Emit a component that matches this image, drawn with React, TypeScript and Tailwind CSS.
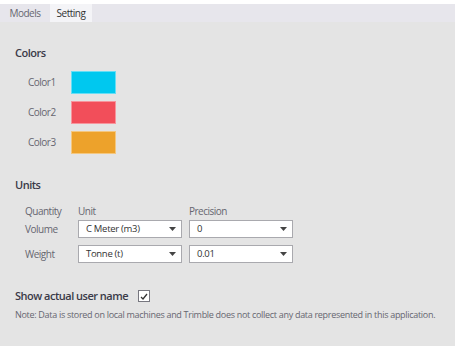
import { useState } from "react";

const colors = [
    { name: "Color1", value: "#00c8ef" },
    { name: "Color2", value: "#f24e5a" },
    { name: "Color3", value: "#eda22b" },
];

const Select = ({ value }: { value: string }) => {
    return (
        <div className="w-[104px] h-[18px] bg-white border border-[#a9a9ae] flex items-center justify-between pl-[7px] pr-[5px]">
            <span className="text-[9.5px] tracking-[-0.3px] text-[#333]">{value}</span>
            <svg width="7" height="4" viewBox="0 0 7 4">
                <path d="M0 0 L7 0 L3.5 4 Z" fill="#444" />
            </svg>
        </div>
    );
};

const App = () => {
    const [showName, setShowName] = useState(true);

    return (
        <div className="w-[455px] h-[346px] bg-[#e4e4e4] flex flex-col font-['Open_Sans','Noto_Sans',sans-serif] tracking-[-0.5px]">
            <div className="h-[4px] bg-white" />
            <div className="h-[18px] bg-[#e7e6ec] flex items-stretch text-[10px]">
                <span className="w-[50px] flex items-center justify-center text-[#666670]">Models</span>
                <span className="w-[42px] flex items-center justify-center bg-[#f4f4f7] text-[#333]">Setting</span>
            </div>

            <div className="flex flex-col pl-[15px]">
                <h2 className="mt-[23px] h-[16px] leading-[16px] text-[11px] font-semibold text-[#3a3a48]">Colors</h2>
                <div className="flex flex-col gap-[7px] mt-[10px]">
                    {colors.map((c) => (
                        <div key={c.name} className="flex items-center h-[23px]">
                            <span className="w-[56px] pl-[13px] text-[10px] text-[#666670]">{c.name}</span>
                            <div className="w-[45px] h-[23px] border border-white/40" style={{ backgroundColor: c.value }} />
                        </div>
                    ))}
                </div>

                <h2 className="mt-[23px] h-[16px] leading-[16px] text-[11px] font-semibold text-[#3a3a48]">Units</h2>
                <div className="flex flex-col pl-[10px] text-[10px] text-[#666670]">
                    <div className="flex mt-[11px] h-[14px] leading-[14px]">
                        <span className="w-[53px]">Quantity</span>
                        <span className="w-[111px]">Unit</span>
                        <span>Precision</span>
                    </div>
                    <div className="flex items-center mt-[2px]">
                        <span className="w-[53px]">Volume</span>
                        <Select value="C Meter (m3)" />
                        <span className="w-[7px]" />
                        <Select value="0" />
                    </div>
                    <div className="flex items-center mt-[7px]">
                        <span className="w-[53px]">Weight</span>
                        <Select value="Tonne (t)" />
                        <span className="w-[7px]" />
                        <Select value="0.01" />
                    </div>
                </div>

                <div className="flex items-center mt-[25px] h-[16px] gap-[10px]">
                    <span className="text-[11px] font-semibold text-[#3a3a48]">Show actual user name</span>
                    <button
                        type="button"
                        onClick={() => setShowName(!showName)}
                        className="w-[12px] h-[12px] bg-white border border-[#77777f] flex items-center justify-center"
                    >
                        {showName && (
                            <svg width="8" height="7" viewBox="0 0 8 7">
                                <path d="M1 4 L3 6 L7 1" stroke="#333" strokeWidth="1.3" fill="none" />
                            </svg>
                        )}
                    </button>
                </div>
                <p className="mt-[5px] h-[12px] leading-[12px] text-[9px] tracking-[-0.3px] text-[#666670] whitespace-nowrap">
                    Note: Data is stored on local machines and Trimble does not collect any data represented in this application.
                </p>
            </div>
        </div>
    );
};

export default App;
